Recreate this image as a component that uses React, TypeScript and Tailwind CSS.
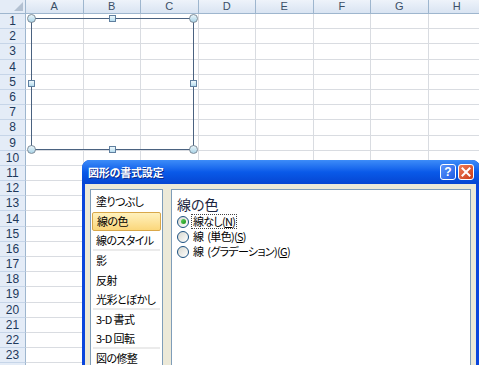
import React from 'react'

const cols = ['A', 'B', 'C', 'D', 'E', 'F', 'G', 'H']
const rows = Array.from({ length: 24 }, (_, i) => i + 1)

const listItems = [
  { label: '塗りつぶし' },
  { label: '線の色', selected: true },
  { label: '線のスタイル', sep: true },
  { label: '影' },
  { label: '反射' },
  { label: '光彩とぼかし', sep: true },
  { label: '3-D 書式' },
  { label: '3-D 回転', sep: true },
  { label: '図の修整' },
]

function Radio({ checked }: { checked?: boolean }) {
  return (
    <span className="w-[12px] h-[12px] shrink-0 rounded-full border border-[#1c5180] bg-gradient-to-br from-[#d8d8cf] to-white flex items-center justify-center">
      {checked && <span className="w-[5px] h-[5px] rounded-full bg-gradient-to-br from-[#5fd35f] to-[#119211]" />}
    </span>
  )
}

function Sheet() {
  return (
    <div className="flex flex-col font-['Liberation_Sans',sans-serif]">
      <div className="flex h-[14px]">
        <div className="relative w-[26px] shrink-0 bg-[#e4ecf7] border-r border-b border-[#9eb6ce]">
          <svg className="absolute right-[2px] bottom-[2px]" width="9" height="9" viewBox="0 0 9 9">
            <polygon points="9,0 9,9 0,9" fill="#b3c1d2" />
          </svg>
        </div>
        {cols.map((c) => (
          <div
            key={c}
            className="w-[57.5px] shrink-0 bg-gradient-to-b from-[#eef3fa] to-[#d9e4f2] border-r border-b border-[#9eb6ce] flex items-center justify-center text-[11px] leading-none text-[#3a4e66]"
          >
            {c}
          </div>
        ))}
      </div>
      {rows.map((n) => (
        <div key={n} className="flex h-[15.2px]">
          <div className="w-[26px] shrink-0 bg-[#e4ecf7] border-r border-r-[#9eb6ce] border-b border-b-[#c6d5e8] flex items-center justify-center text-[12px] leading-none text-[#1e395b]">
            {n}
          </div>
          {cols.map((c) => (
            <div key={c} className="w-[57.5px] shrink-0 border-r border-b border-[#d9dce1]" />
          ))}
        </div>
      ))}
    </div>
  )
}

function Shape() {
  const circle = 'absolute w-[9px] h-[9px] rounded-full border border-[#7d8c99] bg-gradient-to-b from-[#eaf6fb] to-[#a9d3e6]'
  const square = 'absolute w-[7px] h-[7px] border border-[#5f7f9f] bg-gradient-to-b from-[#eef8fc] to-[#b5dcee]'
  return (
    <div className="absolute left-[31px] top-[18px] w-[163px] h-[132px] border border-[#4a6280]">
      <span className={`${circle} -left-[5px] -top-[5px]`} />
      <span className={`${circle} -right-[5px] -top-[5px]`} />
      <span className={`${circle} -left-[5px] -bottom-[5px]`} />
      <span className={`${circle} -right-[5px] -bottom-[5px]`} />
      <span className={`${square} left-[77px] -top-[4px]`} />
      <span className={`${square} left-[77px] -bottom-[4px]`} />
      <span className={`${square} -left-[4px] top-[61px]`} />
      <span className={`${square} -right-[4px] top-[61px]`} />
    </div>
  )
}

function Dialog() {
  return (
    <div className="absolute left-[82px] top-[160px] w-[398px] h-[215px] rounded-t-[8px] bg-[#0b46dc] flex flex-col overflow-hidden font-['Noto_Sans_CJK_JP','Noto_Sans_CJK_SC',sans-serif] [font-feature-settings:'palt','pwid']">
      {/* title bar */}
      <div className="h-[24px] shrink-0 flex items-center pl-[6px] pr-[6px] bg-gradient-to-b from-[#3d8cf8] via-[#0a5ae9] to-[#0645d2]">
        <span className="text-white font-bold text-[11px] leading-none tracking-[-0.2px] whitespace-nowrap [text-shadow:1px_1px_0_#0a2a8a]">図形の書式設定</span>
        <div className="ml-auto flex gap-[2px]">
          <div className="w-[16px] h-[16px] rounded-[3px] border border-white bg-gradient-to-br from-[#5b95fb] to-[#1f59e4] flex items-center justify-center text-white font-bold text-[12px] leading-none font-['Liberation_Sans',sans-serif]">
            ?
          </div>
          <div className="w-[16px] h-[16px] rounded-[3px] border border-white bg-gradient-to-br from-[#ee7b57] to-[#c93913] flex items-center justify-center">
            <svg width="10" height="10" viewBox="0 0 10 10">
              <path d="M1.5 1.5 L8.5 8.5 M8.5 1.5 L1.5 8.5" stroke="white" strokeWidth="2" strokeLinecap="square" />
            </svg>
          </div>
        </div>
      </div>
      {/* body */}
      <div className="flex-1 ml-[3px] mr-[4px] bg-[#ece9d8] flex gap-[8px] pt-[5px] pl-[5px] pr-[5px]">
        <div className="w-[73px] shrink-0 bg-white border border-[#7f9db9] pt-[2px]">
          {listItems.map((it) => (
            <div key={it.label} className="relative h-[19.6px]">
              <div
                className={`mx-[1px] h-full flex items-center pl-[4px] text-[11px] leading-none tracking-[-0.6px] whitespace-pre text-black rounded-[2px] ${
                  it.selected ? 'border border-[#d9a84a] bg-gradient-to-b from-[#fff1bd] to-[#fbd77a] pl-[3px]' : ''
                }`}
              >
                {it.label}
              </div>
              {it.sep && <div className="absolute left-[2px] right-[2px] bottom-0 h-[2px] bg-[#ebebeb]" />}
            </div>
          ))}
        </div>
        <div className="flex-1 bg-white border border-[#7f9db9] pl-[5px] pt-[3px]">
          <div className="text-[14px] leading-[22px] text-[#1b2440] whitespace-nowrap">線の色</div>
          <div className="flex flex-col -mt-[1px]">
            <div className="flex items-center h-[15px] gap-[2px]">
              <Radio checked />
              <span className="text-[11px] leading-none tracking-[-0.7px] whitespace-nowrap text-black border border-dotted border-[#444] px-[1px] py-[1px]">
                線なし(<u>N</u>)
              </span>
            </div>
            <div className="flex items-center h-[15px] gap-[2px]">
              <Radio />
              <span className="text-[11px] leading-none tracking-[-0.7px] whitespace-nowrap text-black px-[2px]">
                線<span className="ml-[4px]">(単色)(<u>S</u>)</span>
              </span>
            </div>
            <div className="flex items-center h-[15px] gap-[2px]">
              <Radio />
              <span className="text-[11px] leading-none tracking-[-0.7px] whitespace-nowrap text-black px-[2px]">
                線<span className="ml-[4px]">(グラデーション)(<u>G</u>)</span>
              </span>
            </div>
          </div>
        </div>
      </div>
    </div>
  )
}

export default function App() {
  return (
    <div className="relative w-[479px] h-[365px] overflow-hidden bg-white">
      <Sheet />
      <Shape />
      <Dialog />
    </div>
  )
}
